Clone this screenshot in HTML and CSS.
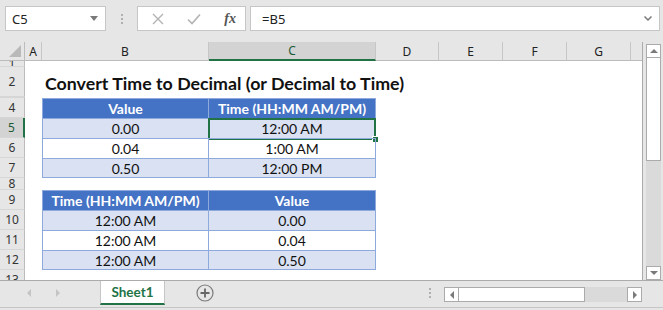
FILE: index.html
```html
<!DOCTYPE html>
<html>
<head>
    <title>Convert Time to Decimal</title>
    <meta name="viewport" content="width=device-width, initial-scale=1">
    <link rel="stylesheet" href="styles.css">
</head>
<body>
    <div class="app">
        <!-- Formula bar -->
        <div class="toolbar">
            <div class="namebox">
                <span>C5</span>
                <svg class="nb-arrow" width="8" height="5" viewBox="0 0 8 5"><path d="M0 0h8L4 5z" fill="#7a7a7a"/></svg>
            </div>
            <div class="grip"><i></i><i></i><i></i></div>
            <div class="fbtns">
                <svg width="12" height="12" viewBox="0 0 12 12"><path d="M1 1l10 10M11 1L1 11" stroke="#b3b3b3" stroke-width="1.4" fill="none"/></svg>
                <svg width="14" height="12" viewBox="0 0 14 12"><path d="M1 6.5l4 4L13 1.5" stroke="#b3b3b3" stroke-width="1.6" fill="none"/></svg>
                <span class="fx">fx</span>
            </div>
            <div class="fbar">
                <span>=B5</span>
                <svg class="chev" width="8" height="5" viewBox="0 0 8 5"><path d="M0.5 0.5L4 4l3.5-3.5" stroke="#7a7a7a" stroke-width="1.5" fill="none"/></svg>
            </div>
        </div>

        <div class="main">
            <div class="sheet">
                <!-- column headers -->
                <div class="corner"><span class="tri"></span></div>
                <div class="ch">A</div>
                <div class="ch">B</div>
                <div class="ch active">C</div>
                <div class="ch">D</div>
                <div class="ch">E</div>
                <div class="ch">F</div>
                <div class="ch">G</div>
                <div class="ch last"></div>

                <!-- row 1 -->
                <div class="rh">1</div><div class="rest"></div>
                <!-- row 2 -->
                <div class="rh">2</div><div></div>
                <div class="title">Convert Time to Decimal (or Decimal to Time)</div>
                <!-- row 3 (collapsed) -->
                <div class="rh"></div><div class="rest"></div>

                <!-- table 1 -->
                <div class="rh">4</div><div></div>
                <div class="c hd first">Value</div>
                <div class="c hd">Time (HH:MM AM/PM)</div>
                <div class="fill"></div>

                <div class="rh active">5</div><div></div>
                <div class="c band first">0.00</div>
                <div class="c band sel">12:00 AM<span class="handle"></span></div>
                <div class="fill"></div>

                <div class="rh">6</div><div></div>
                <div class="c first">0.04</div>
                <div class="c">1:00 AM</div>
                <div class="fill"></div>

                <div class="rh">7</div><div></div>
                <div class="c band first end">0.50</div>
                <div class="c band end">12:00 PM</div>
                <div class="fill"></div>

                <div class="rh">8</div><div class="rest"></div>

                <!-- table 2 -->
                <div class="rh">9</div><div></div>
                <div class="c hd first">Time (HH:MM AM/PM)</div>
                <div class="c hd">Value</div>
                <div class="fill"></div>

                <div class="rh">10</div><div></div>
                <div class="c band first">12:00 AM</div>
                <div class="c band">0.00</div>
                <div class="fill"></div>

                <div class="rh">11</div><div></div>
                <div class="c first">12:00 AM</div>
                <div class="c">0.04</div>
                <div class="fill"></div>

                <div class="rh">12</div><div></div>
                <div class="c band first end">12:00 AM</div>
                <div class="c band end">0.50</div>
                <div class="fill"></div>

                <div class="rh">13</div><div class="rest"></div>
            </div>

            <div class="vscroll">
                <div class="sbtn"><svg width="8" height="4" viewBox="0 0 8 4"><path d="M0 4h8L4 0z" fill="#7a7a7a"/></svg></div>
                <div class="vthumb"></div>
                <div class="vtrack"></div>
                <div class="sbtn"><svg width="8" height="4" viewBox="0 0 8 4"><path d="M0 0h8L4 4z" fill="#7a7a7a"/></svg></div>
            </div>
        </div>

        <!-- sheet tabs -->
        <div class="tabbar">
            <div class="tabnav">
                <svg width="4" height="8" viewBox="0 0 4 8"><path d="M4 0v8L0 4z" fill="#c4c4c4"/></svg>
                <svg width="4" height="8" viewBox="0 0 4 8"><path d="M0 0v8l4-4z" fill="#c4c4c4"/></svg>
            </div>
            <div class="tab">Sheet1</div>
            <div class="addsheet">
                <svg width="18" height="18" viewBox="0 0 18 18"><circle cx="9" cy="9" r="8" stroke="#7a7a7a" stroke-width="1.2" fill="none"/><path d="M9 4.5v9M4.5 9h9" stroke="#666" stroke-width="1.8"/></svg>
            </div>
            <div class="grip small"><i></i><i></i><i></i></div>
            <div class="hscroll">
                <div class="sbtn h"><svg width="4" height="8" viewBox="0 0 4 8"><path d="M4 0v8L0 4z" fill="#7a7a7a"/></svg></div>
                <div class="hthumb"></div>
                <div class="htrack"></div>
                <div class="sbtn h"><svg width="4" height="8" viewBox="0 0 4 8"><path d="M0 0v8l4-4z" fill="#7a7a7a"/></svg></div>
            </div>
        </div>
    </div>
</body>
</html>
```

FILE: styles.css
```css
body {
    margin: 0;
    font-family: "Noto Sans", sans-serif;
    background-color: #e6e6e6;
}

.app {
    width: 663px;
    height: 310px;
    overflow: hidden;
    background-color: #e6e6e6;
}

/* formula bar */
.toolbar {
    display: flex;
    align-items: flex-start;
    height: 42px;
    padding: 6px 3px 0 5px;
    box-sizing: border-box;
}

.namebox {
    width: 101px;
    height: 25px;
    box-sizing: border-box;
    border: 1px solid #c6c6c6;
    background-color: #fff;
    display: flex;
    align-items: center;
    justify-content: space-between;
    padding: 0 7px 0 6px;
    font-size: 13px;
    color: #222;
}

.grip {
    width: 31px;
    height: 25px;
    display: flex;
    flex-direction: column;
    align-items: center;
    justify-content: center;
    gap: 2px;
}

.grip i {
    width: 2px;
    height: 2px;
    background-color: #b0b0b0;
}

.fbtns {
    width: 109px;
    height: 25px;
    box-sizing: border-box;
    border: 1px solid #c6c6c6;
    background-color: #fff;
    display: flex;
    align-items: center;
    justify-content: space-between;
    padding: 0 9px 0 14px;
}

.fx {
    font-family: "Liberation Serif", serif;
    font-style: italic;
    font-weight: bold;
    font-size: 14px;
    color: #555;
}

.fbar {
    flex: 1;
    height: 25px;
    margin-left: 4px;
    box-sizing: border-box;
    border: 1px solid #c6c6c6;
    background-color: #fff;
    display: flex;
    align-items: center;
    justify-content: space-between;
    padding: 0 7px 0 11px;
    font-size: 13px;
    color: #222;
}

/* worksheet */
.main {
    display: flex;
    height: 238px;
}

.sheet {
    width: 643px;
    height: 238px;
    overflow: hidden;
    box-sizing: border-box;
    border-right: 1px solid #ababab;
    background-color: #fff;
    display: grid;
    grid-template-columns: 25px 17px 167px 167px 63px 64px 64px 64px 1fr;
    grid-template-rows: 19px 6px 30px 1px 20px 20px 20px 20px 12px 20px 20px 20px 20px 20px;
    font-family: Lato, "Liberation Sans", sans-serif;
    font-size: 14px;
    color: #111;
}

.corner {
    background-color: #e6e6e6;
    border-right: 1px solid #bcbcbc;
    border-bottom: 1px solid #bcbcbc;
    position: relative;
}

.tri {
    position: absolute;
    right: 3px;
    bottom: 3px;
    width: 0;
    height: 0;
    border-left: 12px solid transparent;
    border-bottom: 12px solid #b9b9b9;
}

.ch {
    background-color: #e6e6e6;
    border-right: 1px solid #c6c6c6;
    border-bottom: 1px solid #bcbcbc;
    display: flex;
    align-items: center;
    justify-content: center;
    font-family: "Noto Sans", sans-serif;
    font-size: 12px;
    color: #222;
}

.ch.last {
    border-right: none;
}

.ch.active {
    background-color: #d3d3d3;
    border-bottom: 2px solid #217346;
    color: #1c5a37;
}

.rh {
    grid-column: 1;
    background-color: #e6e6e6;
    border-right: 1px solid #bcbcbc;
    border-bottom: 1px solid #d6d6d6;
    display: flex;
    align-items: center;
    justify-content: center;
    overflow: hidden;
    font-family: "Noto Sans", sans-serif;
    font-size: 12px;
    line-height: 14px;
    color: #333;
}

.rh.active {
    background-color: #d3d3d3;
    border-right: 2px solid #217346;
    color: #1c5a37;
}

.rest {
    grid-column: 2 / -1;
}

.title {
    grid-column: 3 / -1;
    padding-left: 3px;
    font-weight: bold;
    font-size: 17.8px;
    display: flex;
    align-items: center;
    padding-top: 2px;
    white-space: nowrap;
}

.fill {
    grid-column: 5 / -1;
}

.c {
    border-top: 1px solid #8ea9db;
    border-right: 1px solid #8ea9db;
    display: flex;
    align-items: center;
    justify-content: center;
    white-space: nowrap;
    position: relative;
}

.c.first {
    border-left: 1px solid #8ea9db;
}

.c.end {
    border-bottom: 1px solid #8ea9db;
}

.c.hd {
    background-color: #4472c4;
    color: #fff;
    font-weight: bold;
}

.c.band {
    background-color: #d9e1f2;
}

.c.sel::before {
    content: "";
    position: absolute;
    top: -1px;
    left: -1px;
    right: -1px;
    bottom: -2px;
    border: 2px solid #217346;
}

.handle {
    position: absolute;
    right: -4px;
    bottom: -5px;
    width: 5px;
    height: 5px;
    background-color: #217346;
    border: 1px solid #fff;
}

/* vertical scrollbar */
.vscroll {
    width: 15px;
    margin-left: 3px;
    display: flex;
    flex-direction: column;
    padding-top: 2px;
}

.sbtn {
    height: 14px;
    box-sizing: border-box;
    border: 1px solid #ababab;
    background-color: #fff;
    display: flex;
    align-items: center;
    justify-content: center;
}

.vthumb {
    height: 103px;
    box-sizing: border-box;
    border: 1px solid #ababab;
    border-top: none;
    background-color: #fff;
}

.vtrack {
    flex: 1;
    background-color: #dadada;
}

/* sheet tabs */
.tabbar {
    display: flex;
    align-items: flex-start;
    height: 28px;
    border-top: 1px solid #ababab;
    border-bottom: 1px solid #c6c6c6;
    box-sizing: border-box;
}

.tabnav {
    width: 100px;
    height: 24px;
    display: flex;
    align-items: center;
    gap: 25px;
    padding-left: 27px;
    box-sizing: border-box;
}

.tab {
    width: 65px;
    height: 24px;
    box-sizing: border-box;
    background-color: #fff;
    border-left: 1px solid #c6c6c6;
    border-right: 1px solid #c6c6c6;
    border-bottom: 2px solid #217346;
    display: flex;
    align-items: center;
    justify-content: center;
    font-family: Lato, "Liberation Sans", sans-serif;
    font-weight: bold;
    font-size: 13.5px;
    color: #217346;
}

.addsheet {
    width: 82px;
    height: 24px;
    display: flex;
    align-items: center;
    justify-content: center;
}

.addsheet svg {
    margin-left: -2px;
}

.grip.small {
    width: 3px;
    height: 24px;
    margin-left: 181px;
    align-items: center;
}

.hscroll {
    display: flex;
    width: 198px;
    height: 15px;
    margin-left: 13px;
    margin-top: 6px;
}

.sbtn.h {
    width: 15px;
    height: 15px;
}

.hthumb {
    width: 126px;
    box-sizing: border-box;
    border: 1px solid #ababab;
    border-left: none;
    background-color: #fff;
}

.htrack {
    flex: 1;
    background-color: #dadada;
}
```
